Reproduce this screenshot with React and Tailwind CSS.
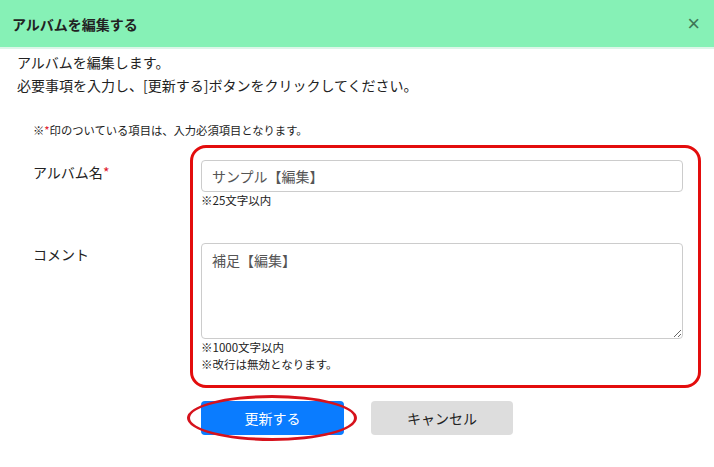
import React from "react"

const font = { fontFamily: '"Noto Sans CJK JP", "Noto Sans", sans-serif' }

export default function App() {
    return (
        <div className="w-[714px] h-[467px] bg-white text-[#222] overflow-hidden" style={font}>
            {/* header */}
            <div className="h-[47px] bg-[#86f1b6] flex items-center justify-between pl-[12px] pr-[14px]">
                <h1 className="text-[14px] font-bold leading-none">アルバムを編集する</h1>
                <button className="text-[22px] leading-none text-[#3f7656]" style={{ fontFamily: '"Liberation Sans", sans-serif' }}>×</button>
            </div>
            <div className="h-[2px] bg-[#dcf6e8]" />

            {/* intro */}
            <div className="pt-[2px] px-[17px] text-[14px] leading-[23px]">
                <p>アルバムを編集します。</p>
                <p>必要事項を入力し、[更新する]ボタンをクリックしてください。</p>
            </div>

            <p className="mt-[25px] pl-[33px] text-[11.3px] leading-[16px]">
                ※<span className="text-[#e0162b]">*</span>印のついている項目は、入力必須項目となります。
            </p>

            {/* form */}
            <div className="flex mt-[7px]">
                <div className="w-[190px] pl-[33px] pt-[17px] text-[14px] leading-[20px]">
                    <div>
                        アルバム名<span className="text-[#e0162b]">*</span>
                    </div>
                    <div className="mt-[62px]">コメント</div>
                </div>

                <div className="w-[511px] border-[3px] border-[#e30d0d] rounded-[16px] pl-[8px] pr-[15px] pt-[12px] pb-[12px]">
                    <input
                        className="block w-full h-[32px] border border-[#ccc] rounded-[4px] px-[10px] text-[14px] text-[#555] outline-none"
                        style={font}
                        defaultValue="サンプル【編集】"
                    />
                    <p className="text-[11.5px] leading-[17px]">※25文字以内</p>

                    <textarea
                        className="block w-full h-[96px] mt-[34px] border border-[#ccc] rounded-[4px] px-[10px] py-[6px] text-[14px] leading-[20px] text-[#555] outline-none"
                        style={font}
                        defaultValue="補足【編集】"
                    />
                    <p className="text-[11.5px] leading-[17px]">※1000文字以内</p>
                    <p className="text-[11.5px] leading-[17px]">※改行は無効となります。</p>
                </div>
            </div>

            {/* buttons */}
            <div className="flex gap-[27px] pl-[201px] mt-[13px]">
                <div className="relative">
                    <button className="w-[143px] h-[34px] bg-[#0a7cff] text-white text-[14px] rounded-[4px]">更新する</button>
                    <div className="absolute left-[-14px] top-[-6px] w-[170px] h-[46px] border-[3px] border-[#d6121c] rounded-[50%] pointer-events-none" />
                </div>
                <button className="w-[142px] h-[34px] bg-[#dddddd] text-[#222] text-[14px] rounded-[4px]">キャンセル</button>
            </div>
        </div>
    )
}
